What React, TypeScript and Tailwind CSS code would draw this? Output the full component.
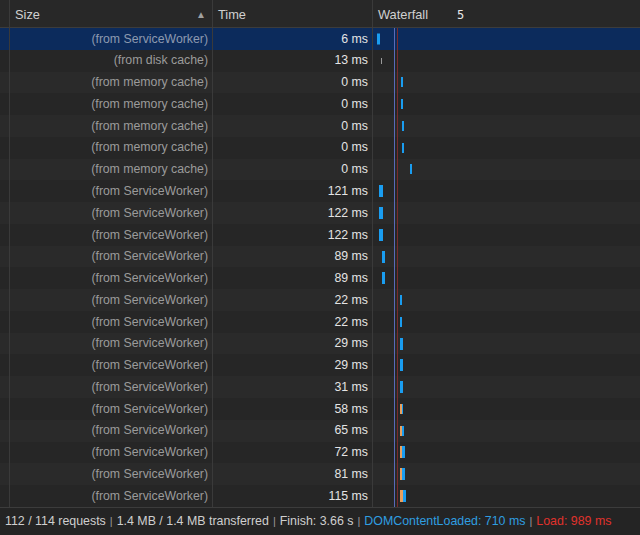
import React from "react";

type Seg = { left: number; width: number; color: string; h?: string };
type Row = { size: string; time: string; segs: Seg[] };

const B = "#1a9df0";
const O = "#e8a060";
const G = "#9a9a9a";

const rows: Row[] = [
  { size: "(from ServiceWorker)", time: "6 ms", segs: [{ left: 4, width: 3, color: B, h: "h-[11px]" }] },
  { size: "(from disk cache)", time: "13 ms", segs: [{ left: 8, width: 1, color: G, h: "h-[6px]" }] },
  { size: "(from memory cache)", time: "0 ms", segs: [{ left: 28, width: 2, color: B, h: "h-[10px]" }] },
  { size: "(from memory cache)", time: "0 ms", segs: [{ left: 28, width: 2, color: B, h: "h-[10px]" }] },
  { size: "(from memory cache)", time: "0 ms", segs: [{ left: 29, width: 2, color: B, h: "h-[10px]" }] },
  { size: "(from memory cache)", time: "0 ms", segs: [{ left: 29, width: 2, color: B, h: "h-[10px]" }] },
  { size: "(from memory cache)", time: "0 ms", segs: [{ left: 37, width: 2, color: B, h: "h-[10px]" }] },
  { size: "(from ServiceWorker)", time: "121 ms", segs: [{ left: 6, width: 4, color: B, h: "h-[12px]" }] },
  { size: "(from ServiceWorker)", time: "122 ms", segs: [{ left: 6, width: 4, color: B, h: "h-[12px]" }] },
  { size: "(from ServiceWorker)", time: "122 ms", segs: [{ left: 6, width: 4, color: B, h: "h-[12px]" }] },
  { size: "(from ServiceWorker)", time: "89 ms", segs: [{ left: 9, width: 3, color: B, h: "h-[12px]" }] },
  { size: "(from ServiceWorker)", time: "89 ms", segs: [{ left: 9, width: 3, color: B, h: "h-[12px]" }] },
  { size: "(from ServiceWorker)", time: "22 ms", segs: [{ left: 27, width: 2, color: B, h: "h-[10px]" }] },
  { size: "(from ServiceWorker)", time: "22 ms", segs: [{ left: 27, width: 2, color: B, h: "h-[10px]" }] },
  { size: "(from ServiceWorker)", time: "29 ms", segs: [{ left: 27, width: 3, color: B, h: "h-[12px]" }] },
  { size: "(from ServiceWorker)", time: "29 ms", segs: [{ left: 27, width: 3, color: B, h: "h-[12px]" }] },
  { size: "(from ServiceWorker)", time: "31 ms", segs: [{ left: 27, width: 3, color: B, h: "h-[12px]" }] },
  { size: "(from ServiceWorker)", time: "58 ms", segs: [{ left: 27, width: 2, color: O, h: "h-[10px]" }, { left: 29, width: 1, color: B, h: "h-[10px]" }] },
  { size: "(from ServiceWorker)", time: "65 ms", segs: [{ left: 27, width: 2, color: O, h: "h-[10px]" }, { left: 29, width: 2, color: B, h: "h-[10px]" }] },
  { size: "(from ServiceWorker)", time: "72 ms", segs: [{ left: 27, width: 2, color: O, h: "h-[12px]" }, { left: 29, width: 3, color: B, h: "h-[12px]" }] },
  { size: "(from ServiceWorker)", time: "81 ms", segs: [{ left: 27, width: 2, color: O, h: "h-[12px]" }, { left: 29, width: 3, color: B, h: "h-[12px]" }] },
  { size: "(from ServiceWorker)", time: "115 ms", segs: [{ left: 27, width: 3, color: O, h: "h-[12px]" }, { left: 30, width: 3, color: B, h: "h-[12px]" }] },
];

export default function App() {
  return (
    <div
      className="w-[640px] h-[535px] bg-[#242424] flex flex-col overflow-hidden text-[12.3px]"
      style={{ fontFamily: '"Liberation Sans", Arial, sans-serif' }}
    >
      {/* Header */}
      <div className="flex h-[28px] bg-[#282828] border-b border-[#3c3c3c] shrink-0 text-[#d0d0d0] text-[12.8px]">
        <div className="w-[10px] border-r border-[#3a3a3a]" />
        <div className="w-[203px] flex items-center justify-between pl-[5px] pr-[6px] pt-[2px] border-r border-[#3a3a3a]">
          <span>Size</span>
          <span className="text-[#a0a0a0] text-[10px]">▲</span>
        </div>
        <div className="w-[160px] flex items-center pl-[5px] pt-[2px] border-r border-[#3a3a3a]">
          <span>Time</span>
        </div>
        <div className="flex-1 flex items-center pl-[5px] pt-[2px]">
          <span>Waterfall</span>
          <span className="ml-[29px] text-[#e8e8e8] text-[12px]" style={{ fontFamily: '"DejaVu Sans Mono", monospace' }}>5</span>
        </div>
      </div>

      {/* Rows */}
      <div className="relative h-[479px] shrink-0">
        {rows.map((r, i) => {
          const sel = i === 0;
          const bg = sel ? "bg-[#0c2b5c]" : i % 2 === 1 ? "bg-[#262626]" : "bg-[#2a2a2a]";
          return (
            <div key={i} className={`flex h-[21.77px] ${bg}`}>
              <div className="w-[10px] border-r border-[#3a3a3a]" />
              <div
                className={`w-[203px] flex items-center justify-end pr-[4px] border-r border-[#3a3a3a] ${
                  sel ? "text-[#8d9ab0]" : "text-[#9b9b9b]"
                }`}
              >
                {r.size}
              </div>
              <div className="w-[160px] flex items-center justify-end pr-[4px] border-r border-[#3a3a3a] text-[#e4e4e4]">
                {r.time}
              </div>
              <div className="flex-1 relative">
                {r.segs.map((s, j) => (
                  <div
                    key={j}
                    className={`absolute top-1/2 -translate-y-1/2 ${s.h ?? "h-[10px]"}`}
                    style={{ left: s.left, width: s.width, backgroundColor: s.color }}
                  />
                ))}
              </div>
            </div>
          );
        })}
        {/* DOMContentLoaded and Load lines */}
        <div className="absolute top-0 bottom-0 left-[394px] w-px bg-[#5a6ab8]" />
        <div className="absolute top-0 bottom-0 left-[397px] w-px bg-[#7a2a2a]" />
      </div>

      {/* Footer */}
      <div className="flex-1 flex items-center border-t border-[#3c3c3c] bg-[#242424] pl-[5px] text-[12.4px] text-[#cfcfcf] whitespace-nowrap">
        <span>112 / 114 requests</span>
        <span className="mx-[4px] text-[#9a9a9a] text-[11px]">|</span>
        <span>1.4 MB / 1.4 MB transferred</span>
        <span className="mx-[4px] text-[#9a9a9a] text-[11px]">|</span>
        <span>Finish: 3.66 s</span>
        <span className="mx-[4px] text-[#9a9a9a] text-[11px]">|</span>
        <span className="text-[#2f9ee0]">DOMContentLoaded: 710 ms</span>
        <span className="mx-[4px] text-[#9a9a9a] text-[11px]">|</span>
        <span className="text-[#e0322c]">Load: 989 ms</span>
      </div>
    </div>
  );
}
